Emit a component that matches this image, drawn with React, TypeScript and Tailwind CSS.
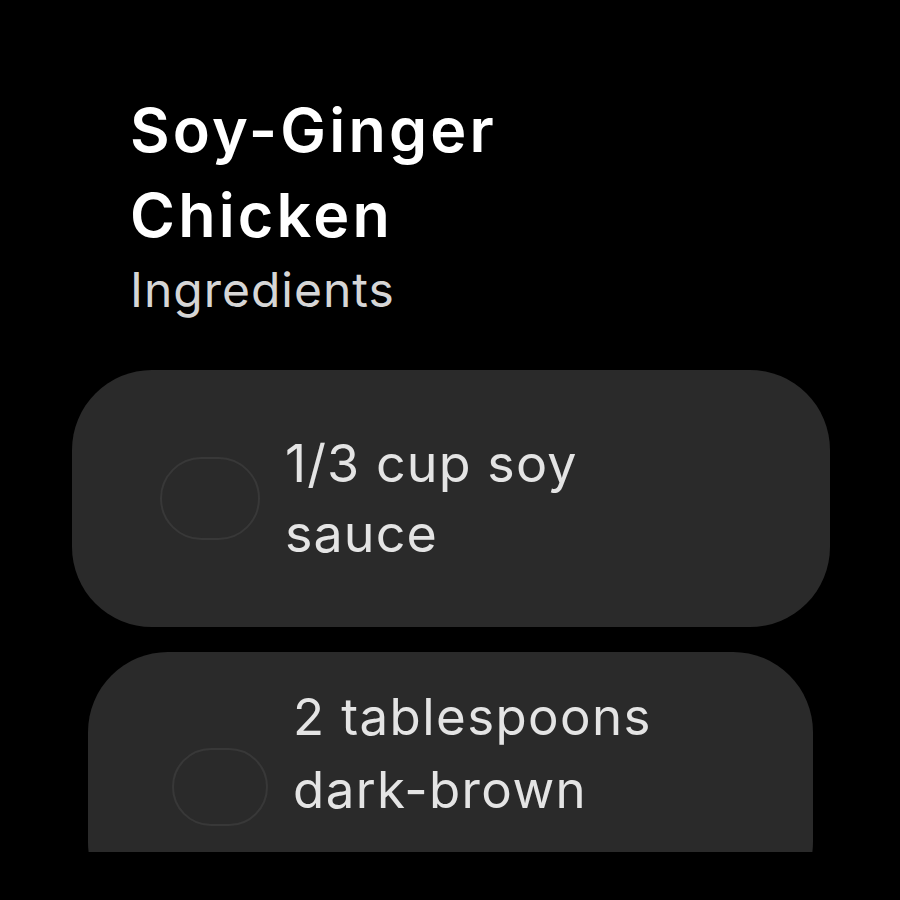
export default function App() {
  return (
    <div
      className="w-[900px] h-[900px] bg-black overflow-hidden flex flex-col"
      style={{ fontFamily: "Inter, 'Noto Sans', sans-serif" }}
    >
      <div className="pl-[130px] pt-[88px]">
        <h1 className="text-[61px] leading-[85px] font-semibold text-white tracking-[3.2px]">
          Soy-Ginger
          <br />
          Chicken
        </h1>
        <p className="mt-[2px] text-[48px] leading-[60px] text-[#d6d6d6] tracking-[1px]">
          Ingredients
        </p>
      </div>

      <div className="mt-[50px] h-[482px] overflow-hidden flex flex-col gap-[25px]">
        <div className="ml-[72px] w-[758px] h-[257px] shrink-0 rounded-[80px] bg-[#2a2a2a] flex items-center pl-[88px]">
          <div className="w-[100px] h-[83px] shrink-0 rounded-full border-2 border-[#383838]" />
          <div className="ml-[25px] text-[52px] leading-[70px] text-[#e4e4e4] tracking-[1.1px]">
            1/3 cup soy
            <br />
            sauce
          </div>
        </div>
        <div className="ml-[88px] w-[725px] h-[270px] shrink-0 rounded-[80px] bg-[#2a2a2a] flex items-start pl-[84px]">
          <div className="mt-[96px] w-[96px] h-[78px] shrink-0 rounded-full border-2 border-[#383838]" />
          <div className="mt-[28px] ml-[25px] text-[51px] leading-[73px] text-[#e4e4e4] tracking-[1.4px]">
            2 tablespoons
            <br />
            dark-brown
          </div>
        </div>
      </div>
    </div>
  );
}
